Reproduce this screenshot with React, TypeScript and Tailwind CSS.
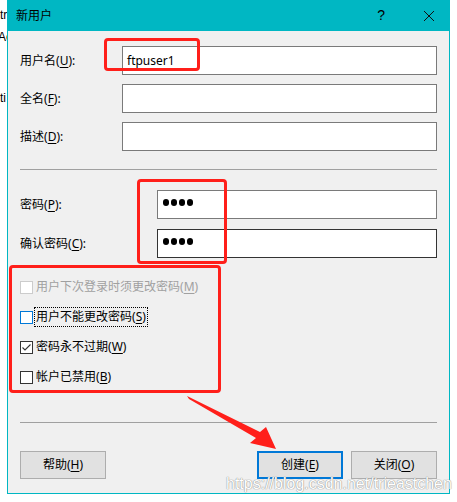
import React from 'react';

const FONT = "font-['Noto_Sans','Noto_Sans_CJK_SC',sans-serif]";

const Key: React.FC<{ k: string }> = ({ k }) => (
  <>
    (<span className="underline underline-offset-2">{k}</span>)
  </>
);

const Field: React.FC<{
  label: string;
  k: string;
  labelW: string;
  value?: React.ReactNode;
  dark?: boolean;
}> = ({ label, k, labelW, value, dark }) => (
  <div className="flex h-[29px] items-center">
    <div className={`${labelW} shrink-0 text-[12px] text-black`}>
      {label}
      <Key k={k} />:
    </div>
    <div
      className={`flex h-[29px] flex-1 items-center border bg-white px-[4px] text-[12px] text-black ${
        dark ? 'border-[#333333]' : 'border-[#7a7a7a]'
      }`}
    >
      {value}
    </div>
  </div>
);

const Dots = () => (
  <div className="ml-[1px] flex gap-[2px] pb-[4px]">
    {[0, 1, 2, 3].map((i) => (
      <span key={i} className="h-[7px] w-[6px] rounded-full bg-black" />
    ))}
  </div>
);

const Check: React.FC<{
  label: string;
  k: string;
  state: 'disabled' | 'focus' | 'checked' | 'plain';
}> = ({ label, k, state }) => {
  const box =
    state === 'disabled'
      ? 'border-[#cccccc]'
      : state === 'focus'
        ? 'border-[#0078d7]'
        : 'border-[#333333]';
  return (
    <div className="flex h-[20px] items-center">
      <div className={`flex h-[13px] w-[13px] items-center justify-center border bg-white ${box}`}>
        {state === 'checked' && (
          <svg width="11" height="11" viewBox="0 0 11 11">
            <path d="M1.5 5.5 L4 8 L9.5 2.5" fill="none" stroke="#333" strokeWidth="1.1" />
          </svg>
        )}
      </div>
      <span
        className={`ml-[2px] px-[1px] text-[12px] leading-[18px] ${
          state === 'disabled' ? 'text-[#a0a0a0]' : 'text-black'
        } ${state === 'focus' ? 'outline outline-1 outline-dotted outline-black' : ''}`}
      >
        {label}
        <Key k={k} />
      </span>
    </div>
  );
};

const Btn: React.FC<{ label: string; k: string; primary?: boolean }> = ({ label, k, primary }) => (
  <div
    className={`flex h-[28px] w-[86px] items-center justify-center bg-[#e1e1e1] text-[12px] text-black ${
      primary ? 'border-2 border-[#0078d7]' : 'border border-[#adadad]'
    }`}
  >
    {label}
    <Key k={k} />
  </div>
);

export default function App() {
  return (
    <div className={`relative flex h-[502px] w-[457px] overflow-hidden bg-white ${FONT}`}>
      {/* window behind */}
      <div className="w-[7px] shrink-0 overflow-hidden whitespace-nowrap font-['Liberation_Sans',sans-serif] text-[12px] text-black">
        <div className="mt-[7px] leading-[16px]">tr</div>
        <div className="mt-[6px] -ml-[2px] leading-[16px]">Ac</div>
        <div className="mt-[45px] leading-[16px]">ti</div>
      </div>

      {/* dialog */}
      <div className="flex h-[494px] w-[443px] shrink-0 flex-col border-x border-b border-[#00b7c3] bg-[#f0f0f0]">
        <div className="flex h-[31px] shrink-0 items-center bg-[#00b7c3] pl-[8px] text-[12px] text-black">
          <span>新用户</span>
          <span className="ml-auto mr-[38px] font-['Liberation_Sans',sans-serif] text-[14px]">?</span>
          <svg className="mr-[14px]" width="12" height="12" viewBox="0 0 12 12">
            <path d="M1 1 L11 11 M11 1 L1 11" stroke="#111" strokeWidth="1" />
          </svg>
        </div>

        <div className="flex flex-1 flex-col px-[12px] pt-[15px] pb-[14px]">
          <div className="flex flex-col gap-[9px]">
            <Field label="用户名" k="U" labelW="w-[102px]" value="ftpuser1" />
            <Field label="全名" k="F" labelW="w-[102px]" />
            <Field label="描述" k="D" labelW="w-[102px]" />
          </div>

          <div className="mt-[18px] h-px bg-[#a0a0a0]" />

          <div className="mt-[20px] flex flex-col gap-[10px]">
            <Field label="密码" k="P" labelW="w-[137px]" value={<Dots />} />
            <Field label="确认密码" k="C" labelW="w-[137px]" value={<Dots />} dark />
          </div>

          <div className="mt-[19px] flex flex-col gap-[10px]">
            <Check label="用户下次登录时须更改密码" k="M" state="disabled" />
            <Check label="用户不能更改密码" k="S" state="focus" />
            <Check label="密码永不过期" k="W" state="checked" />
            <Check label="帐户已禁用" k="B" state="plain" />
          </div>

          <div className="mt-[35px] h-px bg-[#a0a0a0]" />

          <div className="mt-[28px] flex">
            <Btn label="帮助" k="H" />
            <div className="ml-auto flex gap-[8px]">
              <Btn label="创建" k="E" primary />
              <Btn label="关闭" k="O" />
            </div>
          </div>
        </div>
      </div>

      {/* annotations */}
      <div className="absolute left-[104px] top-[38px] h-[33px] w-[96px] rounded-[4px] border-[3px] border-[#ff1f1a]" />
      <div className="absolute left-[137px] top-[179px] h-[85px] w-[90px] rounded-[4px] border-[3px] border-[#ff1f1a]" />
      <div className="absolute left-[9px] top-[265px] h-[128px] w-[212px] rounded-[4px] border-[3px] border-[#ff1f1a]" />
      <svg className="absolute left-0 top-0" width="457" height="502" viewBox="0 0 457 502">
        <polygon
          points="187,396 260,432 266,427 276,449 250,443 256,438 189,399"
          fill="#ff1f1a"
        />
      </svg>

      <div className="absolute left-[226px] top-[472px] font-['Liberation_Sans',sans-serif] text-[16px] text-white [text-shadow:0_0_1px_#8c8c8c,0_0_1px_#8c8c8c]">
        https://blog.csdn.net/trieastchen
      </div>
    </div>
  );
}
